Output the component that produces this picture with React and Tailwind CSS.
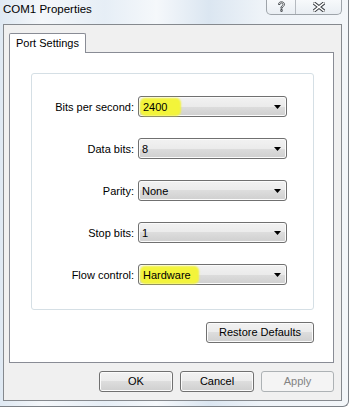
import React from 'react';

const face =
  'h-[21px] flex items-center border border-[#707070] rounded-[3px] bg-[linear-gradient(#f2f2f2_0%,#ebebeb_50%,#dddddd_50%,#cfcfcf_100%)] shadow-[inset_0_0_0_1px_#fbfbfb]';
const btn = `${face} justify-center`;

function Arrow() {
  return (
    <svg width="7" height="4" viewBox="0 0 7 4" className="shrink-0 ml-auto">
      <polygon points="0,0 7,0 3.5,4" fill="#000" />
    </svg>
  );
}

function Combo({ value, mark }) {
  return (
    <div className={`${face} w-[149px] pl-[3px] pr-[5px]`}>
      {mark ? (
        <span className={`bg-[#f3f43a] shadow-[0_0_2px_2px_#f3f43a] rounded-[3px] pl-[1px] leading-[14px] ${mark}`}>
          {value}
        </span>
      ) : (
        <span className="leading-[14px]">{value}</span>
      )}
      <Arrow />
    </div>
  );
}

const rows = [
  { label: 'Bits per second:', value: '2400', mark: 'pr-[12px]' },
  { label: 'Data bits:', value: '8' },
  { label: 'Parity:', value: 'None' },
  { label: 'Stop bits:', value: '1' },
  { label: 'Flow control:', value: 'Hardware', mark: 'pr-[6px]' },
];

export default function App() {
  return (
    <div className="w-[358px] h-[408px] bg-white overflow-hidden font-['Liberation_Sans',Arial,sans-serif] text-[11px] text-black">
      <div className="w-[349px] h-[407px] flex flex-col border-r border-b border-[#7d8288] rounded-br-[6px] bg-[linear-gradient(90deg,#dfe9f3_0%,#f4f7fa_12%,#e6eef6_30%,#f5f8fb_45%,#dbe6f1_60%,#eef3f8_75%,#f3f6f9_100%)]">
        {/* title bar */}
        <div className="h-[24px] flex items-start shrink-0">
          <span className="ml-[3px] mt-[2px] leading-[14px] text-[11.5px]">COM1 Properties</span>
          <div className="ml-auto mr-[6px] -mt-px flex h-[16px] w-[76px] border border-t-0 border-[#9ea4aa] rounded-b-[5px] bg-[linear-gradient(#f8fafc,#e9eef3)] overflow-hidden">
            <div className="w-[29px] flex items-center justify-center border-r border-[#b5bac0]">
              <svg width="9" height="12" viewBox="0 0 9 12">
                <path
                  d="M1.5 3.5 C1.5 1.5 3 0.8 4.5 0.8 C6.3 0.8 7.5 2 7.5 3.4 C7.5 5 5.5 5.5 5.2 7.2 L3.8 7.2 C3.9 5 6 4.6 6 3.4 C6 2.5 5.3 2 4.5 2 C3.6 2 3 2.6 3 3.5 Z M3.8 8.5 H5.2 V10.4 H3.8 Z"
                  fill="#fff"
                  stroke="#3b3f44"
                  strokeWidth="0.9"
                  strokeLinejoin="round"
                />
              </svg>
            </div>
            <div className="flex-1 flex items-center justify-center">
              <svg width="12" height="10" viewBox="0 0 12 10">
                <path d="M1 1 L11 9 M11 1 L1 9" stroke="#3b3f44" strokeWidth="3.4" strokeLinecap="square" />
                <path d="M1 1 L11 9 M11 1 L1 9" stroke="#fff" strokeWidth="1.6" strokeLinecap="square" />
              </svg>
            </div>
          </div>
        </div>

        {/* client area */}
        <div className="ml-[3px] w-[339px] h-[377px] bg-[#f0f0f0] border border-[#85898e] flex flex-col shrink-0">
          {/* tab */}
          <div className="ml-[5px] mt-[8px] w-[77px] h-[20px] bg-white border border-b-0 border-[#898c95] rounded-t-[2px] -mb-px relative z-10 flex items-start justify-center pt-[3px]">
            <span className="leading-[13px]">Port Settings</span>
          </div>

          {/* tab page */}
          <div className="ml-[5px] w-[325px] h-[311px] bg-white border border-[#898c95] flex flex-col">
            <div className="ml-[21px] mt-[20px] w-[283px] h-[237px] border border-[#d5dfe5] rounded-[3px] flex flex-col gap-[21px] pt-[22px]">
              {rows.map((r) => (
                <div key={r.label} className="flex items-center h-[21px]">
                  <span className="w-[103px] text-right pr-[1px] leading-[14px]">{r.label}</span>
                  <span className="w-[3px]" />
                  <Combo value={r.value} mark={r.mark} />
                </div>
              ))}
            </div>
            <div className="ml-[21px] mt-[12px] w-[283px] flex justify-end">
              <div className={`${btn} w-[108px]`}>Restore Defaults</div>
            </div>
          </div>

          {/* dialog buttons */}
          <div className="ml-[5px] mt-[8px] w-[325px] flex justify-end gap-[7px]">
            <div className={`${btn} w-[74px]`}>OK</div>
            <div className={`${btn} w-[74px]`}>Cancel</div>
            <div className="h-[21px] w-[73px] flex items-center justify-center border border-[#adb2b5] rounded-[3px] bg-[#f4f4f4] text-[#838383]">
              Apply
            </div>
          </div>
        </div>
      </div>
    </div>
  );
}
